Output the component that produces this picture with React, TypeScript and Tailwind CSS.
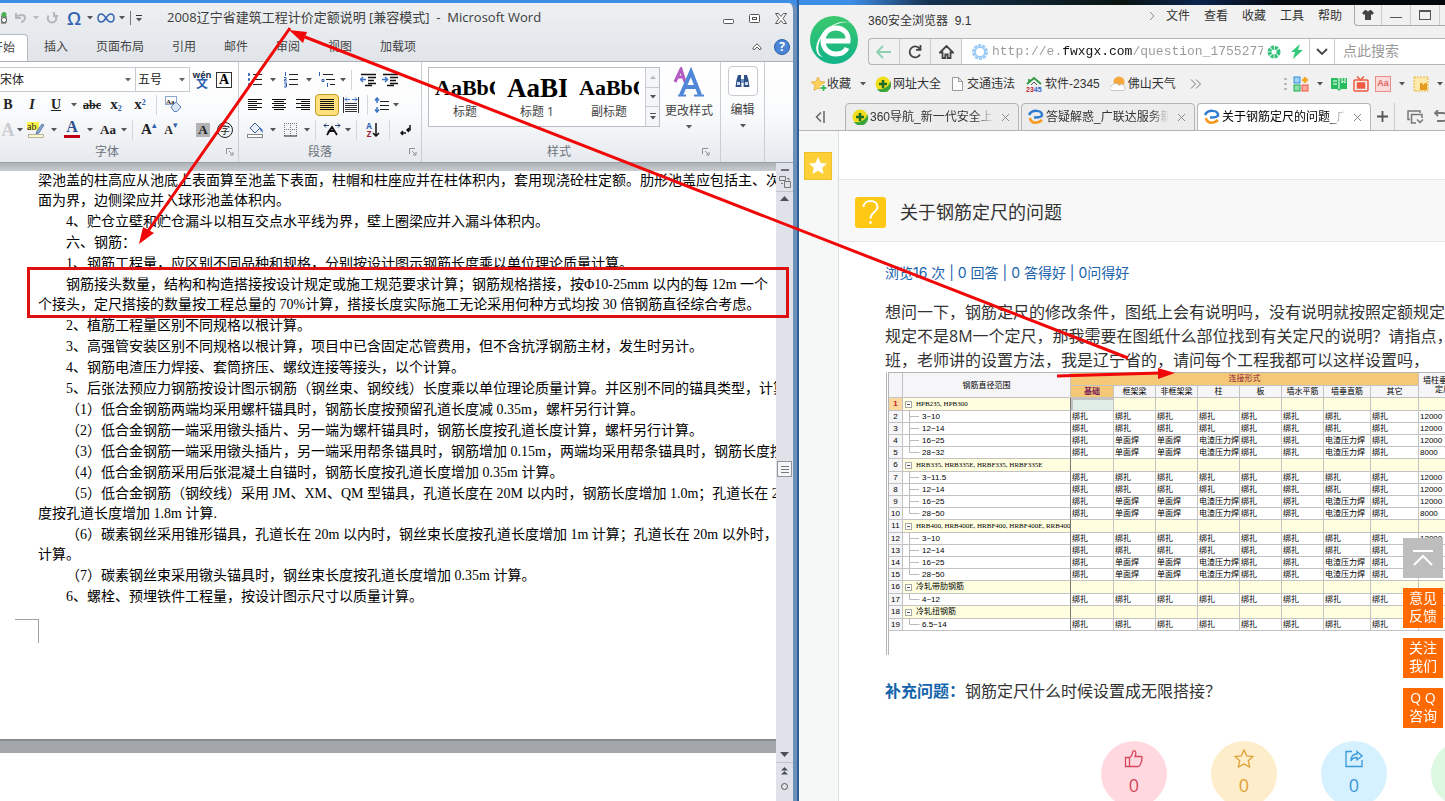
import { useState } from "react"
import type { ReactNode } from "react"
import clsx from "clsx"

const cjk = "font-['Open_Sans','Noto_Sans_CJK_SC',sans-serif]"
const song = "font-['Liberation_Sans','Noto_Sans_CJK_SC',sans-serif]"

const ribbonTabs = ["插入", "页面布局", "引用", "邮件", "审阅", "视图", "加载项"]

const styleCards = [
  { sample: "AaBbC", name: "标题", size: "text-[22px]" },
  { sample: "AaBI", name: "标题 1", size: "text-[27px]" },
  { sample: "AaBbC", name: "副标题", size: "text-[22px]" },
]

type Paragraph = { indent: boolean; lines: string[] }

const paragraphs: Paragraph[] = [
  {
    indent: false,
    lines: [
      "梁池盖的柱高应从池底上表面算至池盖下表面，柱帽和柱座应并在柱体积内，套用现浇砼柱定额。肋形池盖应包括主、次梁",
      "面为界，边侧梁应并入球形池盖体积内。",
    ],
  },
  { indent: true, lines: ["4、贮仓立壁和贮仓漏斗以相互交点水平线为界，壁上圈梁应并入漏斗体积内。"] },
  { indent: true, lines: ["六、钢筋："] },
  { indent: true, lines: ["1、钢筋工程量，应区别不同品种和规格，分别按设计图示钢筋长度乘以单位理论质量计算。"] },
  {
    indent: true,
    lines: [
      "钢筋接头数量，结构和构造搭接按设计规定或施工规范要求计算；钢筋规格搭接，按Φ10-25mm 以内的每 12m 一个",
      "个接头，定尺搭接的数量按工程总量的 70%计算，搭接长度实际施工无论采用何种方式均按 30 倍钢筋直径综合考虑。",
    ],
  },
  { indent: true, lines: ["2、植筋工程量区别不同规格以根计算。"] },
  { indent: true, lines: ["3、高强管安装区别不同规格以根计算，项目中已含固定芯管费用，但不含抗浮钢筋主材，发生时另计。"] },
  { indent: true, lines: ["4、钢筋电渣压力焊接、套筒挤压、螺纹连接等接头，以个计算。"] },
  { indent: true, lines: ["5、后张法预应力钢筋按设计图示钢筋（钢丝束、钢绞线）长度乘以单位理论质量计算。并区别不同的锚具类型，计算"] },
  { indent: true, lines: ["（1）低合金钢筋两端均采用螺杆锚具时，钢筋长度按预留孔道长度减 0.35m，螺杆另行计算。"] },
  { indent: true, lines: ["（2）低合金钢筋一端采用镦头插片、另一端为螺杆锚具时，钢筋长度按孔道长度计算，螺杆另行计算。"] },
  { indent: true, lines: ["（3）低合金钢筋一端采用镦头插片，另一端采用帮条锚具时，钢筋增加 0.15m，两端均采用帮条锚具时，钢筋长度按"] },
  { indent: true, lines: ["（4）低合金钢筋采用后张混凝土自锚时，钢筋长度按孔道长度增加 0.35m 计算。"] },
  {
    indent: true,
    lines: [
      "（5）低合金钢筋（钢绞线）采用 JM、XM、QM 型锚具，孔道长度在 20M 以内时，钢筋长度增加 1.0m；孔道长在 20",
      "度按孔道长度增加 1.8m 计算.",
    ],
  },
  {
    indent: true,
    lines: [
      "（6）碳素钢丝采用锥形锚具，孔道长在 20m 以内时，钢丝束长度按孔道长度增加 1m 计算；孔道长在 20m 以外时，钢",
      "计算。",
    ],
  },
  { indent: true, lines: ["（7）碳素钢丝束采用镦头锚具时，钢丝束长度按孔道长度增加 0.35m 计算。"] },
  { indent: true, lines: ["6、螺栓、预埋铁件工程量，按设计图示尺寸以质量计算。"] },
]

const joints = ["基础", "框架梁", "非框架梁", "柱", "板", "墙水平筋", "墙垂直筋", "其它"]
const plain = ["绑扎", "绑扎", "绑扎", "绑扎", "绑扎", "绑扎", "绑扎", "绑扎"]
const welded = ["绑扎", "单面焊", "单面焊", "电渣压力焊", "绑扎", "绑扎", "电渣压力焊", "绑扎"]

type Row = { name: string; group?: boolean; last?: boolean; cells?: string[]; len?: string }

const rows: Row[] = [
  { name: "HPB235, HPB300", group: true },
  { name: "3~10", cells: plain, len: "12000" },
  { name: "12~14", cells: plain, len: "12000" },
  { name: "16~25", cells: welded, len: "12000" },
  { name: "28~32", cells: welded, len: "8000", last: true },
  { name: "HRB335, HRB335E, HRBF335, HRBF335E", group: true },
  { name: "3~11.5", cells: plain, len: "12000" },
  { name: "12~14", cells: plain, len: "12000" },
  { name: "16~25", cells: welded, len: "12000" },
  { name: "28~50", cells: welded, len: "8000", last: true },
  { name: "HRB400, HRB400E, HRBF400, HRBF400E, RRB400,", group: true },
  { name: "3~10", cells: plain, len: "12000" },
  { name: "12~14", cells: plain, len: "12000" },
  { name: "16~25", cells: welded, len: "12000" },
  { name: "28~50", cells: welded, len: "8000", last: true },
  { name: "冷轧带肋钢筋", group: true },
  { name: "4~12", cells: plain, len: "12000", last: true },
  { name: "冷轧扭钢筋", group: true },
  { name: "6.5~14", cells: plain, len: "12000", last: true },
]

function Caret({ className = "text-[#555]" }: { className?: string }) {
  return (
    <svg width="6" height="4" viewBox="0 0 6 4" className={clsx("shrink-0", className)}>
      <path d="M0 0h6L3 3.5z" fill="currentColor" />
    </svg>
  )
}

function Tool({ label, w = "w-6", children }: { label: string; w?: string; children: ReactNode }) {
  return (
    <button aria-label={label} className={clsx("flex h-6 shrink-0 items-center justify-center leading-none", w)}>
      {children}
    </button>
  )
}

function More({ label, w = "w-3" }: { label: string; w?: string }) {
  return (
    <Tool label={`${label}选项`} w={w}>
      <Caret />
    </Tool>
  )
}

function Sep() {
  return <span className="mx-1 h-5 w-px shrink-0 bg-[#d3d7dc]" />
}

function Launcher() {
  return (
    <svg width="8" height="8" viewBox="0 0 8 8" fill="none" stroke="#8a9099">
      <path d="M.5 6V.5H6M3 3l3.500 3.500M7 4v3H4" />
    </svg>
  )
}

function GroupLabel({ text, launcher = true }: { text: string; launcher?: boolean }) {
  return (
    <div className="mt-auto flex h-5 items-center px-1 text-[12px] text-[#6b727b]">
      <span className="flex-1 pr-4 text-center">{text}</span>
      {launcher && (
        <button aria-label={`${text}设置`} className="w-2">
          <Launcher />
        </button>
      )}
    </div>
  )
}

function AlignIcon({ lines }: { lines: [number, number][] }) {
  return (
    <svg width="16" height="14" viewBox="0 0 16 14" stroke="#111">
      {lines.map(([a, b], i) => (
        <path key={i} d={`M${a} ${i * 2 + 1.5}H${b}`} />
      ))}
    </svg>
  )
}

function ListIcon({ marks }: { marks: ReactNode }) {
  return (
    <svg width="16" height="16" viewBox="0 0 16 16" stroke="#222" fill="none">
      <path d="M6 2.500h9M6 7.500h9M6 12.500h9" />
      {marks}
    </svg>
  )
}

function IndentIcon({ right }: { right?: boolean }) {
  return (
    <svg width="17" height="14" viewBox="0 0 17 14" stroke="#111" fill="none">
      <path d="M1 1.500h15M8 4.500h8M8 7.500h6M8 10.500h8M5 12.500h7" strokeWidth="1.500" />
      <path d={right ? "M0 6.500h5M3 4l2.500 2.500L3 9" : "M6 6.500H1M3 4L.5 6.500 3 9"} stroke="#3b74c8" strokeWidth="1.500" />
    </svg>
  )
}

function FontGroup() {
  return (
    <div className="flex w-[239px] shrink-0 flex-col border-r border-[#c9ced4] pt-[5px]">
      <div className="flex h-[25px] items-center">
        <label className="relative flex h-[25px] w-[136px] items-center border border-l-0 border-[#c6cbd1] bg-white">
          <select aria-label="字体" className="h-full w-full appearance-none text-[12px] text-[#222] outline-none">
            <option>宋体</option>
          </select>
          <Caret className="pointer-events-none absolute right-1 text-[#666]" />
        </label>
        <label className="relative flex h-[25px] w-[54px] items-center border border-l-0 border-[#c6cbd1] bg-white">
          <select aria-label="字号" className="h-full w-full appearance-none pl-0.5 text-[12px] text-[#222] outline-none">
            <option>五号</option>
          </select>
          <Caret className="pointer-events-none absolute right-1 text-[#666]" />
        </label>
        <Tool label="拼音指南">
          <span className="flex flex-col items-center text-[#26344d]">
            <span className="text-[9px] font-bold leading-[7px]">wén</span>
            <span className="text-[12px] font-bold leading-[11px] text-[#2f5fae]">文</span>
          </span>
        </Tool>
        <Tool label="字符边框" w="w-5">
          <span className="flex size-4 items-center justify-center border border-[#333] font-['Liberation_Serif',serif] text-[14px] font-bold">A</span>
        </Tool>
      </div>
      <div className="-ml-1 flex h-[25px] items-center font-['Liberation_Serif',serif] text-[14px] text-[#222]">
        <Tool label="加粗"><b>B</b></Tool>
        <Tool label="倾斜"><i className="font-bold">I</i></Tool>
        <Tool label="下划线"><b className="underline">U</b></Tool>
        <More label="下划线" />
        <Tool label="删除线"><b className="text-[12px] line-through">abc</b></Tool>
        <Tool label="下标"><b className="text-[15px]">x<sub className="text-[8px] text-[#2f5fae]">2</sub></b></Tool>
        <Tool label="上标"><b className="text-[15px]">x<sup className="text-[8px] text-[#2f5fae]">2</sup></b></Tool>
        <Sep />
        <Tool label="清除格式">
          <svg width="17" height="17" viewBox="0 0 17 17" fill="none">
            <rect x=".5" y=".5" width="11" height="8" fill="#fff" stroke="#8fa7cc" />
            <text x="1" y="7.500" fontSize="7" fontWeight="bold" fill="#222">Aa</text>
            <path d="M6 11l5-5 5 5-4 4.500H9z" fill="#dbe7f7" stroke="#5c7fb5" />
          </svg>
        </Tool>
      </div>
      <div className="flex h-[25px] items-center font-['Liberation_Serif',serif] text-[#222]">
        <Tool label="文本效果" w="w-4"><b className="text-[18px] text-[#c9ccd0]">A</b></Tool>
        <More label="文本效果" w="w-2" />
        <Tool label="突出显示">
          <svg width="18" height="18" viewBox="0 0 18 18">
            <rect width="12" height="8" y="1" fill="#f8f14a" />
            <text x="0" y="9" fontSize="10" fill="#222">ab</text>
            <path d="M10 10l5-7 2 1-5 8-3 1z" fill="#8aa8d6" stroke="#44608f" strokeWidth=".7" />
            <rect x="1.500" y="13.500" width="15" height="3" fill="#fff9c4" stroke="#999" strokeWidth=".7" />
          </svg>
        </Tool>
        <More label="突出显示" />
        <Tool label="字体颜色">
          <span className="flex flex-col items-center">
            <b className="text-[16px] leading-3 text-[#2c4f8e]">A</b>
            <span className="mt-0.5 h-[3px] w-4 bg-[#c00014]" />
          </span>
        </Tool>
        <More label="字体颜色" />
        <Tool label="更改大小写"><b className="text-[13px]">Aa</b></Tool>
        <More label="更改大小写" w="w-2" />
        <Sep />
        <Tool label="增大字体"><b className="text-[15px]">A</b><sup className="text-[9px] text-[#2f5fae]">▴</sup></Tool>
        <Tool label="缩小字体" w="w-5"><b className="text-[12px]">A</b><sup className="text-[9px] text-[#2f5fae]">▾</sup></Tool>
        <span className="w-2.5" />
        <Tool label="字符底纹"><b className="bg-[#b4b4b4] px-0.5 text-[13px] leading-[14px]">A</b></Tool>
        <Tool label="带圈字符" w="w-5"><span className={clsx("flex size-4 items-center justify-center rounded-full border border-[#222] text-[10px]", cjk)}>字</span></Tool>
      </div>
      <GroupLabel text="字体" />
    </div>
  )
}

function ParagraphGroup() {
  return (
    <div className="flex w-[183px] shrink-0 flex-col border-r border-[#c9ced4] pl-1 pt-[5px]">
      <div className="flex h-[25px] items-center">
        <Tool label="项目符号">
          <ListIcon marks={<path d="M1 2.500h2M1 7.500h2M1 12.500h2" stroke="#2f5fae" strokeWidth="2.500" />} />
        </Tool>
        <More label="项目符号" />
        <Tool label="编号">
          <ListIcon marks={<path d="M2.500 0v4M1 5.500h2v2H1.500v1.500H4M1 11h2.500v4H1M1.500 13H3" stroke="#2f5fae" />} />
        </Tool>
        <More label="编号" />
        <Tool label="多级列表">
          <svg width="18" height="16" viewBox="0 0 18 16" stroke="#222" fill="none">
            <path d="M5 2.500h10M8 7.500h9M12 12.500h5" />
            <path d="M1.500 0v4M4 7.500h2v2H4zM9.500 11v4" stroke="#2f5fae" />
          </svg>
        </Tool>
        <More label="多级列表" w="w-2" />
        <Sep />
        <Tool label="减少缩进"><IndentIcon /></Tool>
        <Tool label="增加缩进" w="w-5"><IndentIcon right /></Tool>
      </div>
      <div className="flex h-[25px] items-center">
        <Tool label="左对齐"><AlignIcon lines={[[1, 15], [1, 10], [1, 15], [1, 10], [1, 15], [1, 10]]} /></Tool>
        <Tool label="居中"><AlignIcon lines={[[1, 15], [3, 13], [1, 15], [3, 13], [1, 15], [3, 13]]} /></Tool>
        <Tool label="右对齐"><AlignIcon lines={[[1, 15], [6, 15], [1, 15], [6, 15], [1, 15], [6, 15]]} /></Tool>
        <button aria-label="两端对齐" className="flex h-[22px] w-6 shrink-0 items-center justify-center rounded-sm border border-[#c29b29] bg-[#ffe07a]">
          <AlignIcon lines={[[1, 15], [1, 15], [1, 15], [1, 15], [1, 15], [1, 15]]} />
        </button>
        <Tool label="分散对齐">
          <svg width="16" height="16" viewBox="0 0 16 16" stroke="#333" fill="none">
            <path d="M.5 0v16M15.500 0v16M2 6.500h12M2 8.500h12M2 10.500h12M2 12.500h12M2 14.500h12" />
            <path d="M2 2.500h5M9 2.500h5M4 .5L2 2.500l2 2M12 .5l2 2-2 2" stroke="#3b74c8" />
          </svg>
        </Tool>
        <Sep />
        <Tool label="行距" w="w-5">
          <svg width="16" height="16" viewBox="0 0 16 16" fill="none" stroke="#222">
            <path d="M6 4.500h9M6 8.500h9M6 12.500h9" />
            <path d="M3 1v5M3 10v5M1 3.500L3 1l2 2.500M1 12.500L3 15l2-2.500" stroke="#3b74c8" strokeWidth="1.500" />
          </svg>
        </Tool>
        <More label="行距" w="w-2" />
      </div>
      <div className="flex h-[25px] items-center">
        <Tool label="底纹">
          <svg width="17" height="16" viewBox="0 0 17 16">
            <path d="M3 6l5-5 5 5-5 5z" fill="#e8f0fa" stroke="#44608f" />
            <path d="M12 5c3 1 4 3 4 6l-3-3z" fill="#3b74c8" />
            <rect x=".5" y="12.500" width="15" height="3" fill="#fff" stroke="#888" />
          </svg>
        </Tool>
        <More label="底纹" />
        <Tool label="边框">
          <svg width="14" height="14" viewBox="0 0 14 14" fill="none" stroke="#777" strokeDasharray="1 1">
            <path d="M.5 0v13M6.500 0v13M12.500 0v13M0 .5h13M0 6.500h13" />
            <path d="M0 13h13" stroke="#222" strokeDasharray="none" />
          </svg>
        </Tool>
        <More label="边框" w="w-2" />
        <Sep />
        <Tool label="中文版式">
          <svg width="18" height="14" viewBox="0 0 18 14" fill="none" stroke="#111">
            <path d="M4 12l5-8 5 8M9 4l-3 4h6" strokeWidth="1.800" />
            <path d="M1 2.500h5M12 2.500h5M3 .5l-2 2 2 2M15 .5l2 2-2 2" stroke="#28406f" />
          </svg>
        </Tool>
        <More label="中文版式" w="w-2" />
        <Sep />
        <Tool label="排序">
          <span className="flex items-center">
            <span className="flex flex-col text-[8px] font-bold leading-2">
              <span className="text-[#2f5fae]">A</span>
              <span className="text-[#a02030]">Z</span>
            </span>
            <svg width="8" height="14" viewBox="0 0 8 14" fill="none" stroke="#111" strokeWidth="1.500">
              <path d="M4 0v13M1 10l3 3 3-3" />
            </svg>
          </span>
        </Tool>
        <Sep />
        <Tool label="显示编辑标记">
          <svg width="12" height="12" viewBox="0 0 12 12" fill="none" stroke="#111" strokeWidth="1.500">
            <path d="M10 1v5H7M9 4L7 6l2 2M6 9H1M3 7L1 9l2 2" />
          </svg>
        </Tool>
      </div>
      <GroupLabel text="段落" />
    </div>
  )
}

function StylesGroup() {
  return (
    <div className="flex w-[299px] shrink-0 flex-col border-r border-[#c9ced4] px-1.5 pt-[5px]">
      <div className="flex">
        <div className="flex h-[60px] border border-[#b9bfc7] bg-white">
          {styleCards.map((s, i) => (
            <button key={i} className="flex w-[72px] flex-col items-center overflow-hidden px-1.5 pt-1.5">
              <span className={clsx("flex h-7 w-full items-center overflow-hidden whitespace-nowrap font-['Liberation_Serif',serif] font-bold leading-none text-black", s.size)}>
                {s.sample}
              </span>
              <span className="text-[12px] leading-5 text-[#444]">{s.name}</span>
            </button>
          ))}
          <div className="flex w-3.5 flex-col divide-y divide-[#c6cbd1] border-l border-[#c6cbd1] bg-[#f4f6f8]">
            <button aria-label="上一行" className="flex flex-1 items-center justify-center"><Caret className="rotate-180 text-[#bbb]" /></button>
            <button aria-label="下一行" className="flex flex-1 items-center justify-center"><Caret /></button>
            <button aria-label="更多样式" className="flex flex-1 flex-col items-center justify-center gap-0.5">
              <span className="h-px w-1.5 bg-[#555]" />
              <Caret />
            </button>
          </div>
        </div>
        <button className="flex flex-1 flex-col items-center pl-1 text-[12px] text-[#444]">
          <svg width="32" height="30" viewBox="0 0 32 30" fill="none">
            <path d="M2 15L8 2l4 13M4 10h6" stroke="#b35bc0" strokeWidth="3" />
            <path d="M8 28L18 5l9 23M12 20h12" stroke="#4f86d8" strokeWidth="4" />
            <path d="M5 28.500h8M21 28.500h10" stroke="#4f86d8" strokeWidth="2" />
          </svg>
          <span className="leading-7">更改样式</span>
          <Caret />
        </button>
      </div>
      <GroupLabel text="样式" />
    </div>
  )
}

function Ribbon() {
  return (
    <div className="flex h-[102px] shrink-0 overflow-hidden border-b border-t border-[#9aa1aa] border-t-[#a9b0b9] bg-gradient-to-b from-white via-[#fafbfc] to-[#e6e9ee]">
      <FontGroup />
      <ParagraphGroup />
      <StylesGroup />
      <div className="flex w-[44px] shrink-0 flex-col items-center border-r border-[#c9ced4] pt-1">
        <button className="flex flex-col items-center text-[12px] text-[#444]">
          <span className="flex size-[30px] items-center justify-center rounded border border-[#c6cbd1] bg-white">
            <svg width="15" height="14" viewBox="0 0 15 14" fill="#2f4f86">
              <path d="M3 1h3v3l.5 9H.5L1.500 6z" />
              <path d="M9 1h3l1.500 5 1 7h-6L9 4z" />
              <path d="M6 5h3v4H6z" fill="#6d8fc4" />
              <path d="M2 8h3v3H2zM10 8h3v3h-3z" fill="#cfdcf0" />
            </svg>
          </span>
          <span className="leading-7">编辑</span>
          <Caret />
        </button>
      </div>
    </div>
  )
}

function WordTitleBar() {
  return (
    <div className="flex h-[30px] shrink-0 items-center text-[#333]">
      <Tool label="打印预览" w="w-2.5">
        <svg width="9" height="14" viewBox="0 0 9 14" fill="none">
          <path d="M0 5h5v7H0z" fill="#ddd" stroke="#555" />
          <circle cx="3" cy="3.500" r="2.500" fill="#4caf50" />
          <circle cx="3" cy="9" r="2.500" fill="#fff" stroke="#555" />
        </svg>
      </Tool>
      <Tool label="撤消" w="w-5">
        <svg width="13" height="12" viewBox="0 0 13 12" fill="none" stroke="#b4b8bd" strokeWidth="2">
          <path d="M2 1v5h5M2 5.500C5 2 11 2 11 6c0 2-2 4-4 4" />
        </svg>
      </Tool>
      <Tool label="撤消选项" w="w-3"><Caret className="text-[#bbb]" /></Tool>
      <Tool label="重复" w="w-5">
        <svg width="12" height="12" viewBox="0 0 12 12" fill="none" stroke="#b4b8bd" strokeWidth="2">
          <path d="M2.500 3.500C0 8 4 11 6.500 10.500 11 10 11 5 8.500 3M8 0v4h4" />
        </svg>
      </Tool>
      <Tool label="符号"><span className="text-[18px] font-semibold text-[#3465b4]">Ω</span></Tool>
      <More label="符号" w="w-2" />
      <Tool label="无穷符号">
        <svg width="18" height="10" viewBox="0 0 18 10" fill="none" stroke="#3465b4" strokeWidth="1.500">
          <path d="M9 5C7 2 6 1 4.500 1 2 1 1 3 1 5s1 4 3.500 4C6 9 7 8 9 5s3-4 4.500-4C16 1 17 3 17 5s-1 4-3.500 4C12 9 11 8 9 5z" />
        </svg>
      </Tool>
      <More label="无穷符号" w="w-2" />
      <span className="ml-1 h-3.5 w-px bg-[#777]" />
      <button aria-label="自定义快速访问工具栏" className="flex w-4 flex-col items-center gap-0.5">
        <span className="h-px w-1.5 bg-[#333]" />
        <Caret />
      </button>
      <h1 className="ml-5 whitespace-nowrap text-[13px] text-[#3c3c3c]">2008辽宁省建筑工程计价定额说明&nbsp;[兼容模式]&nbsp; -&nbsp; Microsoft Word</h1>
      <div className="ml-auto flex items-center gap-3.5 pr-1.5 text-[#444]">
        <button aria-label="最小化">
          <svg width="12" height="11" viewBox="0 0 12 11" fill="#fff" stroke="#555"><rect x=".5" y="6.500" width="10" height="4" rx="1" /></svg>
        </button>
        <button aria-label="最大化">
          <svg width="12" height="11" viewBox="0 0 12 11" fill="#fff" stroke="#555">
            <rect x=".5" y="1.500" width="10" height="8" rx="1" />
            <rect x="3.500" y="4.500" width="4" height="2" />
          </svg>
        </button>
        <button aria-label="关闭">
          <svg width="12" height="11" viewBox="0 0 12 11" fill="#fff" stroke="#555">
            <path d="M.5.500h3L6 3.500 8.500.500h3L8 5.500l3.500 5h-3L6 7.500 3.500 10.500h-3L4 5.500z" />
          </svg>
        </button>
      </div>
    </div>
  )
}

function ScrollBar() {
  return (
    <div className="flex w-[17px] shrink-0 flex-col items-center bg-[#dfe2e8] pt-1.5 text-[#4b5058]">
      <span className="h-0.5 w-2 bg-[#6b7078]" />
      <svg width="12" height="14" viewBox="0 0 12 14" fill="none" stroke="#777" className="mt-1">
        <path d="M.5 1.500h6v4h-6zM5.500 6.500h6v6h-6zM2 8.500h2M8 3.500h2v2" />
      </svg>
      <span className="mt-0.5 h-px w-full bg-[#bfc4cb]" />
      <button aria-label="向上滚动" className="flex h-6 items-start pt-1">
        <svg width="9" height="5" viewBox="0 0 9 5"><path d="M0 5h9L4.500 0z" fill="currentColor" /></svg>
      </button>
      <span className="grow-[245]" />
      <span className="flex h-4 w-[15px] flex-col items-center justify-center gap-0.5 border border-[#8f959d] bg-[#f4f5f7]">
        <span className="h-px w-2 bg-[#777]" />
        <span className="h-px w-2 bg-[#777]" />
        <span className="h-px w-2 bg-[#777]" />
      </span>
      <span className="grow-[274]" />
      <button aria-label="向下滚动" className="flex h-2.5 items-start">
        <svg width="9" height="5" viewBox="0 0 9 5"><path d="M0 0h9L4.500 5z" fill="currentColor" /></svg>
      </button>
      <span className="h-px w-full bg-[#bfc4cb]" />
      <button aria-label="上一页" className="flex h-4 items-center">
        <svg width="7" height="8" viewBox="0 0 7 8"><path d="M0 3.500h7L3.500 0zM0 7.500h7L3.500 4z" fill="currentColor" /></svg>
      </button>
      <button aria-label="选择浏览对象" className="flex h-[22px] items-start pt-1">
        <span className="size-[7px] rounded-full border border-[#555]" />
      </button>
    </div>
  )
}

function WordWindow() {
  return (
    <section className={clsx("flex min-w-0 flex-col overflow-hidden bg-[#3f8ee6] pt-[3px]", cjk)}>
      <div className="flex min-h-0 flex-1 flex-col overflow-hidden rounded-tr-lg border-r-4 border-[#6d8fb8] bg-gradient-to-b from-[#eef0f2] to-[#e0e4e9] to-[60px]">
        <WordTitleBar />
        <div className="flex h-7 shrink-0 items-end text-[12px] text-[#444]">
          <button className="flex h-[27px] w-7 items-center justify-end overflow-hidden whitespace-nowrap rounded-tr border-r border-t border-[#b3b9c1] bg-white pr-3">开始</button>
          <nav className="flex h-7 items-center gap-7 pl-4">
            {ribbonTabs.map((t) => (
              <button key={t}>{t}</button>
            ))}
          </nav>
          <div className="ml-auto flex h-7 items-center gap-3 pr-[3px]">
            <button aria-label="收起功能区">
              <svg width="10" height="8" viewBox="0 0 10 8" fill="#fff" stroke="#555"><path d="M.7 5L5 .8 9.300 5 8 7 5 4 2 7z" /></svg>
            </button>
            <button aria-label="帮助" className="flex size-4 items-center justify-center rounded-full border border-[#2d5fa8] bg-[#4a85d8] text-[12px] font-bold leading-none text-white">?</button>
          </div>
        </div>
        <Ribbon />
        <div className="flex min-h-0 flex-1 bg-white">
          <div className="min-w-0 flex-1 overflow-hidden">
            <div className="h-2 bg-gradient-to-b from-[#aeb2b8] to-[#c9ccd0]" />
            <article className="pb-24 font-['Liberation_Serif','Noto_Sans_CJK_SC',serif] text-[14px] leading-5 text-black">
              {paragraphs.map((p, i) => (
                <p key={i} className={clsx("whitespace-nowrap pl-[38px]", i > 0 && "pt-px", p.indent && "indent-7")}>
                  {p.lines.map((line, j) => (
                    <span key={j}>
                      {j > 0 && <br />}
                      {line}
                    </span>
                  ))}
                </p>
              ))}
              <div className="ml-[15px] mt-3 h-6 w-6 border-r border-t border-[#a0a0a0]" />
            </article>
            <div className="h-3.5 border-t-2 border-[#85888d] bg-[#a3a6ab]" />
          </div>
          <ScrollBar />
        </div>
      </div>
    </section>
  )
}

function EIcon() {
  return (
    <svg width="16" height="16" viewBox="0 0 16 16" fill="none" strokeWidth="2.500">
      <path d="M1 6C4 0 14 1 14 6c0 2-4 2.500-8 2.500" stroke="#2b7bd0" />
      <path d="M2 9c1 6 8 6 12 2" stroke="#f39a1d" />
    </svg>
  )
}

function PlusBadge() {
  return (
    <svg width="16" height="16" viewBox="0 0 16 16">
      <circle cx="8" cy="8" r="7.500" fill="#f2de1c" />
      <path d="M2 13A7.500 7.500 0 0 0 15 5c0 5-6 9-13 8z" fill="#3aa63a" />
      <path d="M8 4v8M4 8h8" stroke="#1d6b25" strokeWidth="2.500" />
    </svg>
  )
}

function BrowserTop() {
  return (
    <header className={clsx("bg-[#f1f1f1] text-[12px] text-[#333]", song)}>
      <div className="flex">
        <svg width="48" height="48" viewBox="0 0 48 48" className="ml-[11px] mt-[11px] shrink-0" fill="none">
          <defs>
            <linearGradient id="logo" x1="0" y1="0" x2="0" y2="1">
              <stop offset="0" stopColor="#3bc96d" />
              <stop offset="1" stopColor="#12b38a" />
            </linearGradient>
          </defs>
          <circle cx="24" cy="24" r="24" fill="url(#logo)" />
          <path d="M14 25h24c1-8-5-13-12-13-8 0-13 6-13 13 0 8 6 13 13 13 5 0 9-2 11-6" stroke="#fff" strokeWidth="5" />
          <path d="M42 8C34 3 17 10 11 22c-4 8-4 16 2 19-8-1-9-11-3-20C17 9 34 2 42 8z" fill="#fff" />
        </svg>
        <div className="ml-2.5 min-w-0 flex-1">
          <div className="flex h-[33px] items-start">
            <span className="pt-2 leading-4">360安全浏览器&nbsp; 9.1</span>
            <nav className="ml-auto flex gap-3.5 pr-3 pt-[3px] leading-4">
              <button aria-label="展开菜单" className="-mr-1">
                <svg width="8" height="10" viewBox="0 0 8 10" fill="none" stroke="#888"><path d="M2 1l4 4-4 4" /></svg>
              </button>
              <button>文件</button>
              <button>查看</button>
              <button>收藏</button>
              <button>工具</button>
              <button>帮助</button>
            </nav>
            <div className="flex h-[21px] w-[91px] divide-x divide-[#ccc] overflow-hidden rounded-bl border-b border-l border-[#aaa]">
              <button aria-label="皮肤" className="flex w-[27px] shrink-0 items-center justify-center">
                <svg width="12" height="10" viewBox="0 0 12 10" fill="#444"><path d="M3 0L0 3l2 2 1-1v6h6V4l1 1 2-2-3-3H8L6 1.500 4 0z" /></svg>
              </button>
              <button aria-label="最小化窗口" className="flex w-[29px] shrink-0 items-center justify-center pt-1"><span className="h-px w-3 bg-[#555]" /></button>
              <button aria-label="最大化窗口" className="flex w-[29px] shrink-0 items-center justify-center"><span className="h-2.5 w-3 border border-t-2 border-[#555]" /></button>
              <span className="w-2 shrink-0" />
            </div>
          </div>
          <div className="flex h-[27px] items-stretch overflow-hidden rounded-l-sm border border-r-0 border-[#b5b5b5]">
            <button aria-label="后退" className="flex w-[31px] shrink-0 items-center justify-center border-r border-[#ccc]">
              <svg width="16" height="14" viewBox="0 0 16 14" fill="none" stroke="#8fd0ae" strokeWidth="1.800"><path d="M15 7H1M7 1L1 7l6 6" /></svg>
            </button>
            <button aria-label="刷新" className="flex w-[31px] shrink-0 items-center justify-center border-r border-[#ccc]">
              <svg width="14" height="14" viewBox="0 0 14 14" fill="none" stroke="#444" strokeWidth="1.800"><path d="M12 9.500A5.500 5.500 0 1 1 11 3L12.500 4.500M12.500 0v4.800H8" /></svg>
            </button>
            <button aria-label="主页" className="flex w-[31px] shrink-0 items-center justify-center border-r border-[#ccc]">
              <svg width="15" height="14" viewBox="0 0 15 14" fill="none" stroke="#444" strokeWidth="1.800"><path d="M1 7.500L7.500 1 14 7.500h-2.500V13h-2.800V9.500H6.300V13H3.500V7.500z" /></svg>
            </button>
            <div className="flex min-w-0 flex-1 items-center bg-white pl-2.5">
              <svg width="16" height="16" viewBox="0 0 16 16" fill="none" className="shrink-0">
                <circle cx="8" cy="8" r="6.500" stroke="#9fcdf5" strokeWidth="3" strokeDasharray="3 1" />
                <circle cx="8" cy="8" r="5" stroke="#9fcdf5" strokeWidth="2" />
              </svg>
              <input
                aria-label="网址"
                defaultValue="http://e.fwxgx.com/question_17552775"
                className="ml-1 min-w-0 flex-1 bg-[linear-gradient(90deg,#999_70px,#111_70px,#111_140px,#999_140px)] bg-clip-text font-['Liberation_Mono',monospace] text-[13px] text-transparent outline-none"
              />
              <svg width="14" height="14" viewBox="0 0 14 14" fill="none" className="mx-1 shrink-0">
                <circle cx="7" cy="7" r="4.500" stroke="#35c27b" strokeWidth="4" strokeDasharray="2.800 .8" />
              </svg>
              <svg width="12" height="15" viewBox="0 0 12 15" className="mx-1.5 shrink-0"><path d="M9 0L0 8h4L2 15 12 6H7z" fill="#35c97a" /></svg>
            </div>
            <button aria-label="地址历史" className="flex w-[26px] shrink-0 items-center justify-center border-x border-[#ccc] bg-white">
              <svg width="12" height="8" viewBox="0 0 12 8" fill="none" stroke="#444" strokeWidth="1.800"><path d="M1 1l5 5 5-5" /></svg>
            </button>
            <input aria-label="搜索" placeholder="点此搜索" className="w-[110px] shrink-0 bg-white pl-2 text-[14px] placeholder:text-[#999] outline-none" />
          </div>
        </div>
      </div>

      <div className="flex h-[38px] items-center pl-3">
        <a href="#fav" className="flex items-center">
          <svg width="16" height="16" viewBox="0 0 16 16">
            <path d="M7 1l2 4.500 5 .5-4 3.500 1 5L7 12l-4 2.500 1-5L0 6l5-.5z" fill="#fbd15b" stroke="#e7a93a" strokeWidth=".8" />
            <path d="M9 12h7M12.500 8.500v7" stroke="#fff" strokeWidth="4" />
            <path d="M9.500 12h6M12.500 9v6" stroke="#3db860" strokeWidth="2" />
          </svg>
          收藏
        </a>
        <button aria-label="收藏菜单" className="flex w-6 items-center justify-center"><Caret /></button>
        <div className="flex items-center gap-2.5 whitespace-nowrap">
          <a href="#hao" className="flex items-center gap-0.5"><PlusBadge />网址大全</a>
          <a href="#traffic" className="flex items-center gap-0.5">
            <svg width="14" height="14" viewBox="0 0 14 14" fill="#fff" stroke="#999"><path d="M1.500.500h6l4 4v9h-10zM7.500.500v4h4" /></svg>
            交通违法
          </a>
          <a href="#soft" className="flex items-center gap-0.5">
            <svg width="18" height="16" viewBox="0 0 18 16" fill="none">
              <path d="M2 8l7-6 7 6M4 3v4" stroke="#2f9a3f" strokeWidth="1.800" />
              <path d="M6 9l3-3 3 3" stroke="#555" />
              <text x="1" y="15.500" fontSize="7" fontWeight="bold" fill="#c62828">23<tspan fill="#2a62c4">45</tspan></text>
            </svg>
            软件-2345
          </a>
          <a href="#weather" className="flex items-center gap-0.5">
            <svg width="16" height="16" viewBox="0 0 16 16">
              <circle cx="9" cy="6" r="5.500" fill="#f7a73b" />
              <path d="M1 14.500a3 3 0 0 1 1-5 4 4 0 0 1 7 0 3 3 0 0 1 5 5z" fill="#fff" stroke="#bbb" strokeWidth=".8" />
            </svg>
            佛山天气
          </a>
          <button aria-label="更多收藏" className="pl-1">
            <svg width="12" height="10" viewBox="0 0 12 10" fill="none" stroke="#777"><path d="M1 .5L5.500 5 1 9.500M6 .5L10.500 5 6 9.500" /></svg>
          </button>
        </div>
        <div className="ml-auto flex items-center gap-1.5 overflow-hidden">
          <svg width="3" height="14" viewBox="0 0 3 14" fill="#bbb"><path d="M0 1h3v2H0zM0 6h3v2H0zM0 11h3v2H0z" /></svg>
          <button aria-label="扩展" className="w-4 shrink-0">
            <svg width="16" height="16" viewBox="0 0 16 16" fill="none">
              <rect x="1" y="1" width="6" height="6" fill="#9fd2f7" stroke="#2f8fdc" />
              <rect x="1" y="9" width="6" height="6" fill="#8fe0a8" stroke="#25a852" />
              <rect x="9" y="9" width="6" height="6" fill="#ffa79a" stroke="#ee5a44" />
              <path d="M12 1v6M9 4h6" stroke="#f5a623" strokeWidth="2.500" />
            </svg>
          </button>
          <button aria-label="扩展菜单" className="flex w-2.5 justify-center"><Caret /></button>
          <button aria-label="阅读" className="w-4 shrink-0">
            <svg width="16" height="14" viewBox="0 0 16 14"><path d="M0 1h6l2 1 2-1h6v11h-6l-2 2-2-2H0z" fill="#27bd5e" /><path d="M2 4h4M2 7h4M8 2v10M11 1v5l1.500-1.500L14 6V1" stroke="#fff" fill="none" /></svg>
          </button>
          <button aria-label="视频" className="w-4 shrink-0">
            <svg width="16" height="16" viewBox="0 0 16 16" fill="none" stroke="#f05b41" strokeWidth="1.500"><rect x="1" y="4" width="14" height="11" rx="1" /><path d="M4 .5L7.500 4 11 .5" /><path d="M4.500 7h7v5h-7z" fill="#f05b41" /></svg>
          </button>
          <button aria-label="翻译" className="flex size-4 shrink-0 items-center justify-center border border-[#e58f8f] bg-[#fbd9d9] text-[9px] font-bold text-[#d66]">Aa</button>
          <button aria-label="翻译菜单" className="flex w-2.5 justify-center"><Caret /></button>
          <button aria-label="截图" className="w-4 shrink-0">
            <svg width="16" height="16" viewBox="0 0 16 16"><rect x="1" y="1" width="14" height="14" fill="#fde9a9" stroke="#e8b23d" strokeDasharray="2 1" /><path d="M7 7h2l1 2 2-2h2v7H7z" fill="#e69a1f" /></svg>
          </button>
          <button aria-label="截图菜单" className="flex w-2.5 justify-center"><Caret /></button>
        </div>
      </div>

      <BrowserTabs />
    </header>
  )
}

const tabs = [
  { title: "360导航_新一代安全上网", icon: <PlusBadge /> },
  { title: "答疑解惑_广联达服务新干线", icon: <EIcon /> },
  { title: "关于钢筋定尺的问题_广联达", icon: <EIcon /> },
]

function BrowserTabs() {
  const [active, setActive] = useState(2)

  return (
    <div className="flex h-7 items-stretch overflow-hidden border-b border-[#b5b5b5]">
      <button aria-label="侧边栏" className="flex w-[46px] shrink-0 items-center justify-center pr-1">
        <svg width="10" height="12" viewBox="0 0 10 12" fill="none" stroke="#666" strokeWidth="1.500"><path d="M6 1.500L1.500 6 6 10.500M9 0v12" /></svg>
      </button>
      <div className="-mb-px flex gap-0.5">
        {tabs.map((t, i) => (
          <div
            key={t.title}
            className={clsx(
              "flex w-[174px] items-center rounded-t border border-[#b5b5b5] pl-1.5 pr-2",
              active === i ? "border-b-white bg-white text-black" : "bg-[#ececec]",
            )}
          >
            <button onClick={() => setActive(i)} className="flex min-w-0 flex-1 items-center gap-0.5 overflow-hidden whitespace-nowrap">
              <span className="shrink-0">{t.icon}</span>
              <span className="min-w-0 overflow-hidden [mask-image:linear-gradient(90deg,#000_85%,transparent)]">{t.title}</span>
            </button>
            <button aria-label="关闭标签" className="ml-2">
              <svg width="9" height="9" viewBox="0 0 9 9" fill="none" stroke="#888"><path d="M1 1l7 7M8 1L1 8" /></svg>
            </button>
          </div>
        ))}
      </div>
      <button aria-label="新标签" className="flex w-6 shrink-0 items-center justify-center border-r border-[#ccc]">
        <svg width="11" height="11" viewBox="0 0 11 11" stroke="#555" strokeWidth="1.800"><path d="M5.500 0v11M0 5.500h11" /></svg>
      </button>
      <button aria-label="标签列表" className="ml-3 shrink-0">
        <svg width="17" height="14" viewBox="0 0 17 14" fill="none" stroke="#777" strokeWidth="1.500"><path d="M3 9.500H1V1h12v2M9 13H4.500V4.500H15V8M10 9.500l3 3 3-3" /></svg>
      </button>
      <button aria-label="恢复标签" className="ml-2.5 shrink-0">
        <svg width="14" height="14" viewBox="0 0 14 14" fill="none" stroke="#777" strokeWidth="1.800"><path d="M4 0L1 3l3 3M1 3h8c5 0 5 8 0 8H3" /></svg>
      </button>
    </div>
  )
}

function JointTable() {
  const cell = "overflow-hidden whitespace-nowrap border-b border-r border-[#c3c3c3] p-0"
  return (
    <div className="ml-px border-l border-[#b5b5b5] pl-px">
      <div className="h-[283px] overflow-hidden border-l border-[#b5b5b5]">
        <table className={clsx("w-[634px] table-fixed border-separate border-spacing-0 border-t border-[#b5b5b5] text-[8px] leading-[11px] text-black", song)}>
          <colgroup>
            <col className="w-[14px]" />
            <col className="w-[168px]" />
            <col className="w-[43px]" />
            <col className="w-[42px]" />
            <col className="w-[42px]" />
            <col className="w-[42px]" />
            <col className="w-[42px]" />
            <col className="w-[42px]" />
            <col className="w-[47px]" />
            <col className="w-[48px]" />
            <col />
          </colgroup>
          <thead className="bg-[#f6f6f8]">
            <tr>
              <th rowSpan={2} className={cell} />
              <th rowSpan={2} className={clsx(cell, "font-normal")}>钢筋直径范围</th>
              <th colSpan={8} className={clsx(cell, "bg-[#f5c878] font-normal leading-3 text-[#8a1c3c]")}>连接形式</th>
              <th rowSpan={2} className={clsx(cell, "pl-1 text-left font-normal leading-[9px]")}>
                墙柱垂直筋
                <br />
                <span className="pl-3">定尺</span>
              </th>
            </tr>
            <tr>
              {joints.map((j, i) => (
                <th key={j} className={clsx(cell, i === 0 ? "bg-[#f5c878] font-bold text-[#7a1c5c]" : "font-normal")}>{j}</th>
              ))}
            </tr>
          </thead>
          <tbody>
            {rows.map((r, i) => (
              <tr key={i} className={r.group ? "bg-[#ffffe0] leading-3" : ""}>
                <th className={clsx(cell, i === 0 ? "bg-[#fbd8a0] text-[#c02020]" : "bg-[#f6f6f8] font-normal")}>{i + 1}</th>
                <td className={clsx(cell, "border-r-[#777]")}>
                  {r.group ? (
                    <div className="flex items-center gap-1 pl-0.5">
                      <button aria-label="折叠" className="flex size-[7px] shrink-0 items-center justify-center border border-[#aaa] bg-white"><span className="h-px w-[3px] bg-[#555]" /></button>
                      <span className={/^H/.test(r.name) ? "font-['Liberation_Serif',serif] text-[7px] leading-3" : ""}>{r.name}</span>
                    </div>
                  ) : (
                    <div className="flex h-[11px] items-center gap-0.5 pl-1.5">
                      <svg width="11" height="12" viewBox="0 0 11 12" fill="none" stroke="#bbb"><path d={r.last ? "M.5 0v5.500h10" : "M.5 0v12M0 5.500h10"} /></svg>
                      <span>{r.name}</span>
                    </div>
                  )}
                </td>
                {joints.map((j, k) => (
                  <td key={j} className={clsx(cell, "pl-px", i === 0 && k === 0 && "border-2 border-[#6f8078] bg-[#e0eee6] leading-[9px]")}>
                    {r.cells?.[k]}
                  </td>
                ))}
                <td className={clsx(cell, "pl-px")}>{r.len}</td>
              </tr>
            ))}
          </tbody>
        </table>
      </div>
    </div>
  )
}

function QuestionPage() {
  return (
    <div className={clsx("flex min-h-0 flex-1 bg-white text-[#333]", cjk)}>
      <aside className="w-10 shrink-0 border-r border-[#ddd] bg-[#f6f7f7] pl-[5px] pt-[21px]">
        <button aria-label="收藏夹" className="flex size-7 items-center justify-center border border-[#f0bf2b] bg-[#fdd037]">
          <svg width="18" height="18" viewBox="0 0 18 18" fill="#fff"><path d="M9 0l2.600 6 6.400.6-4.800 4.200L14.600 17 9 13.700 3.400 17l1.400-6.200L0 6.600 6.400 6z" /></svg>
        </button>
      </aside>
      <main className="min-w-0 flex-1 overflow-hidden">
        <div className="mt-12 flex h-[63px] items-center gap-3.5 border-y border-[#e6e6e6] bg-[#f8f8f8] pl-4 pt-1">
          <span className="flex size-[31px] items-center justify-center rounded-[3px] bg-[#ffc814]">
            <svg width="17" height="25" viewBox="0 0 17 25" fill="none" stroke="#fff" strokeWidth="2">
              <path d="M1.500 7c0-8 14-8 14 0 0 5-7 5-7 11.500M8.500 21v3" />
            </svg>
          </span>
          <h2 className="text-[18px]">关于钢筋定尺的问题</h2>
        </div>
        <div className="pl-[46px] pt-5">
          <p className="font-['Inter','Noto_Sans_CJK_SC',sans-serif] text-[14px] leading-[22px] text-[#1a63ab]">浏览16 次 | 0 回答 | 0 答得好 | 0问得好</p>
          <p className="whitespace-nowrap pt-4 text-[16px] leading-6">
            想问一下，钢筋定尺的修改条件，图纸上会有说明吗，没有说明就按照定额规定
            <br />
            规定不是8M一个定尺，那我需要在图纸什么部位找到有关定尺的说明？请指点，
            <br />
            班，老师讲的设置方法，我是辽宁省的，请问每个工程我都可以这样设置吗，
          </p>
          <JointTable />
          <p className="pt-6 text-[16px] leading-6">
            <b className="text-[#1263ab]">补充问题：</b>钢筋定尺什么时候设置成无限搭接？
          </p>
          <div className="ml-[216px] mt-[38px] flex gap-11 text-[18px]">
            <button className="flex size-[66px] shrink-0 flex-col items-center rounded-full bg-[#ffd9df] pt-2 text-[#d4475c]">
              <svg width="20" height="20" viewBox="0 0 20 20" fill="none" stroke="currentColor" strokeWidth="1.300"><path d="M1.500 8.500h4v9h-4zM5.500 9c3-2 3-4 3.500-7 3-1 3.500 2 2 5.500h6c1.500 0 1.500 2 .5 3 .5 1 .3 2-.5 3 0 1.500-.5 2-1 2.500 0 1-.5 1.500-2 1.500H5.500" /></svg>
              <span className="leading-8">0</span>
            </button>
            <button className="flex size-[66px] shrink-0 flex-col items-center rounded-full bg-[#feedca] pt-2 text-[#dfa238]">
              <svg width="20" height="20" viewBox="0 0 20 20" fill="none" stroke="currentColor" strokeWidth="1.300"><path d="M10 1l2.700 5.800 6.300.7-4.700 4.300L15.600 18 10 15l-5.600 3 1.300-6.200L1 7.500l6.300-.7z" /></svg>
              <span className="leading-8">0</span>
            </button>
            <button className="flex size-[66px] shrink-0 flex-col items-center rounded-full bg-[#d5f0ff] pt-2 text-[#3a98d8]">
              <svg width="20" height="20" viewBox="0 0 20 20" fill="none" stroke="currentColor" strokeWidth="1.300"><path d="M8 2.500H2v15h16V11M7 12c0-5 2-7 6-7V2.500L18 7l-5 4V8.500c-3 0-5 1-6 3.500z" /></svg>
              <span className="leading-8">0</span>
            </button>
            <button aria-label="更多" className="size-[66px] shrink-0 rounded-full bg-[#dcf8e0]" />
          </div>
        </div>
      </main>
    </div>
  )
}

function FloatingTools() {
  const box = "block size-10 bg-[#ff6a00] px-1 pt-px text-center text-[14px] leading-[18px] text-white"
  return (
    <div className={clsx("fixed bottom-[73px] right-0.5 flex flex-col gap-2.5", cjk)}>
      <button aria-label="返回顶部" className="flex size-10 items-center justify-center bg-[#bdbdbd]">
        <svg width="20" height="16" viewBox="0 0 20 16" fill="none" stroke="#fff" strokeWidth="2"><path d="M0 1h20M1 15l9-9 9 9" /></svg>
      </button>
      <a href="#feedback" className={box}>意见<br />反馈</a>
      <a href="#follow" className={box}>关注<br />我们</a>
      <a href="#qq" className={box}>Q Q<br />咨询</a>
    </div>
  )
}

// Red callouts drawn across both windows
function Markup() {
  return (
    <svg className="pointer-events-none absolute inset-0 h-full w-full" fill="none" stroke="#f00808" strokeWidth="3">
      <rect x="28.500" y="268.500" width="759" height="48" stroke="#e01010" />
      <path d="M290 28L148 231M1128 358L305 37M1057 376L1160 373" />
      <path d="M139 244l4-17 11 6zM289 30l18 2-4 11zM1175 373l-17-5v11z" fill="#f00808" stroke="none" />
    </svg>
  )
}

export default function App() {
  return (
    <div className="relative grid h-screen grid-cols-[797fr_648fr] overflow-hidden bg-white">
      <WordWindow />
      <section className="flex min-w-0 flex-col overflow-hidden border-l-2 border-[#2f5f98] bg-[linear-gradient(90deg,#3f8ee6_8%,#16324f_20%,#0a1512_50%,#0c2450_62%,#05080a_75%)] pt-[5px]">
        <BrowserTop />
        <QuestionPage />
      </section>
      <FloatingTools />
      <Markup />
    </div>
  )
}
